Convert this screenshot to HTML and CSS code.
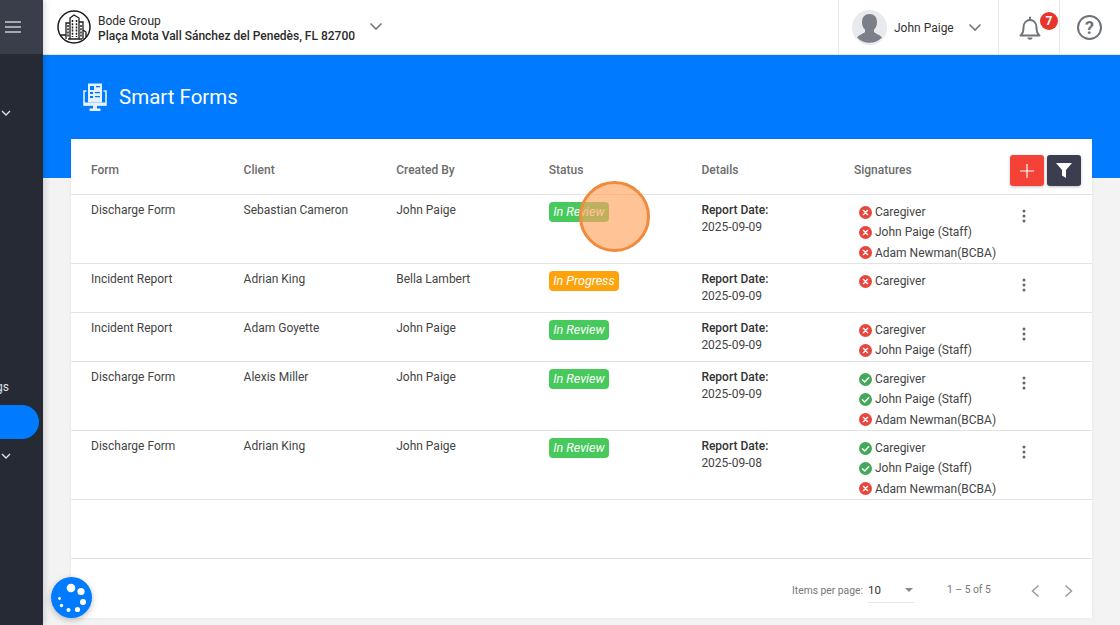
FILE: index.html
```html
<!DOCTYPE html>
<html lang="en">
<head>
    <meta charset="UTF-8">
    <meta name="viewport" content="width=device-width, initial-scale=1.0">
    <title>Smart Forms</title>
    <link rel="stylesheet" href="styles.css">
</head>
<body>
    <svg class="icon-defs" width="0" height="0">
        <symbol id="no" viewBox="0 0 14 14">
            <circle cx="7" cy="7" r="7" fill="#e8453c"/>
            <path d="M4.700 4.700l4.600 4.600M9.300 4.700l-4.600 4.600" stroke="#fff" stroke-width="1.500" stroke-linecap="round"/>
        </symbol>
        <symbol id="yes" viewBox="0 0 14 14">
            <circle cx="7" cy="7" r="7" fill="#43a85a"/>
            <path d="M3.700 7.200l2.400 2.400 4.300-4.500" fill="none" stroke="#fff" stroke-width="1.600" stroke-linecap="round" stroke-linejoin="round"/>
        </symbol>
        <symbol id="kebab" viewBox="0 0 4 14">
            <circle cx="2" cy="2" r="1.500"/>
            <circle cx="2" cy="7" r="1.500"/>
            <circle cx="2" cy="12" r="1.500"/>
        </symbol>
    </svg>

    <aside class="sidebar">
        <div class="side-top">
            <svg width="16" height="12" viewBox="0 0 16 12"><path d="M0 1h16M0 6h16M0 11h16" stroke="#c9ccd3" stroke-width="1.300"/></svg>
        </div>
        <div class="side-nav">
            <svg class="side-chev chev-first" width="10" height="6" viewBox="0 0 10 6"><path d="M1 1l4 4 4-4" fill="none" stroke="#dfe1e6" stroke-width="1.400"/></svg>
            <div class="side-label">Settings</div>
            <div class="side-pill"></div>
            <svg class="side-chev" width="10" height="6" viewBox="0 0 10 6"><path d="M1 1l4 4 4-4" fill="none" stroke="#dfe1e6" stroke-width="1.400"/></svg>
        </div>
    </aside>

    <main class="main">
        <header class="topbar">
            <div class="org">
                <svg class="org-logo" width="34" height="34" viewBox="0 0 34 34">
                    <circle cx="17" cy="17" r="16" fill="#fff" stroke="#1c1c1c" stroke-width="1.500"/>
                    <path d="M9 29V13h4M13 29V8l4-3 5 3v21M22 12h4v17M3.500 25H9M26 20l3 2v5M11 29h14" fill="none" stroke="#1c1c1c" stroke-width="1.300"/>
                    <path d="M15.500 10v17M19.500 10v17M11 15v12M24 15v12" stroke="#1c1c1c" stroke-width="1.500" stroke-dasharray="2 1.200"/>
                </svg>
                <div class="org-text">
                    <div class="org-name">Bode Group</div>
                    <div class="org-addr">Plaça Mota Vall Sánchez del Penedès, FL 82700</div>
                </div>
                <svg class="org-chev" width="14" height="9" viewBox="0 0 14 9"><path d="M1.500 1.500L7 7l5.500-5.500" fill="none" stroke="#777" stroke-width="1.600"/></svg>
            </div>
            <div class="user">
                <svg class="avatar" width="35" height="35" viewBox="0 0 35 35">
                    <circle cx="17.500" cy="17.500" r="17.500" fill="#e9eaed"/>
                    <path d="M10 12c0-5 3-8 7.500-8s7.500 3 7.500 8c0 3.500-1.200 6-3 7.500v2.500c1 1.500 5.500 2.500 8 5.500a17.500 17.500 0 0 1-25 0c2.500-3 7-4 8-5.500v-2.500c-1.800-1.500-3-4-3-7.500z" fill="#7b7f87"/>
                </svg>
                <span class="user-name">John Paige</span>
                <svg width="14" height="9" viewBox="0 0 14 9"><path d="M1.500 1.500L7 7l5.500-5.500" fill="none" stroke="#777" stroke-width="1.600"/></svg>
            </div>
            <div class="bell">
                <svg width="24" height="26" viewBox="0 0 24 26"><path d="M2.500 20.500c2-1.500 3-3.500 3-8 0-4.500 2.800-7.500 6.500-7.500s6.500 3 6.500 7.500c0 4.500 1 6.500 3 8zM12 2.500V5" fill="none" stroke="#6f7378" stroke-width="2" stroke-linejoin="round" stroke-linecap="round"/><path d="M9.500 22.500h5c0 3-5 3-5 0z" fill="#6f7378"/></svg>
                <span class="bell-count">7</span>
            </div>
            <div class="help">
                <span class="help-mark">?</span>
            </div>
        </header>

        <section class="banner">
            <svg width="24" height="28" viewBox="0 0 24 28">
                <path d="M5 .5h14v19H5z" fill="#e6f1ff"/>
                <path d="M7 3h4v4H7zM13 3h4v1.300h-4zM7 9h3v2H7zM12 9h5v1.300h-5zM7 13h3v2H7zM12 13h5v1.300h-5z" fill="#007bff"/>
                <path d="M3.500 8H1v14h22V8h-2.500" fill="none" stroke="#e6f1ff" stroke-width="1.600"/>
                <path d="M1 19.500h22v3H1zM10 22h4v3.500h-4zM6.500 25.500h11V28h-11z" fill="#e6f1ff"/>
            </svg>
            <h1 class="banner-title">Smart Forms</h1>
        </section>

        <section class="card">
            <div class="row head">
                <div>Form</div>
                <div>Client</div>
                <div>Created By</div>
                <div>Status</div>
                <div>Details</div>
                <div>Signatures</div>
                <div class="head-btns">
                    <button class="btn btn-add"><svg width="16" height="16" viewBox="0 0 16 16"><path d="M8 1v14M1 8h14" stroke="#fff" stroke-width="1.200"/></svg></button>
                    <button class="btn btn-filter"><svg width="16" height="15" viewBox="0 0 16 15"><path d="M0 0h16l-6 7v8l-4-2.500V7z" fill="#fff"/></svg></button>
                </div>
            </div>

            <div class="row">
                <div>Discharge Form</div>
                <div>Sebastian Cameron</div>
                <div>John Paige</div>
                <div><span class="tag tag-green">In Review</span></div>
                <div class="details"><b>Report Date:</b><span>2025-09-09</span></div>
                <ul class="signs">
                    <li><svg><use href="#no"/></svg>Caregiver</li>
                    <li><svg><use href="#no"/></svg>John Paige (Staff)</li>
                    <li><svg><use href="#no"/></svg>Adam Newman(BCBA)</li>
                </ul>
                <svg class="kebab"><use href="#kebab"/></svg>
            </div>

            <div class="row">
                <div>Incident Report</div>
                <div>Adrian King</div>
                <div>Bella Lambert</div>
                <div><span class="tag tag-orange">In Progress</span></div>
                <div class="details"><b>Report Date:</b><span>2025-09-09</span></div>
                <ul class="signs">
                    <li><svg><use href="#no"/></svg>Caregiver</li>
                </ul>
                <svg class="kebab"><use href="#kebab"/></svg>
            </div>

            <div class="row">
                <div>Incident Report</div>
                <div>Adam Goyette</div>
                <div>John Paige</div>
                <div><span class="tag tag-green">In Review</span></div>
                <div class="details"><b>Report Date:</b><span>2025-09-09</span></div>
                <ul class="signs">
                    <li><svg><use href="#no"/></svg>Caregiver</li>
                    <li><svg><use href="#no"/></svg>John Paige (Staff)</li>
                </ul>
                <svg class="kebab"><use href="#kebab"/></svg>
            </div>

            <div class="row">
                <div>Discharge Form</div>
                <div>Alexis Miller</div>
                <div>John Paige</div>
                <div><span class="tag tag-green">In Review</span></div>
                <div class="details"><b>Report Date:</b><span>2025-09-09</span></div>
                <ul class="signs">
                    <li><svg><use href="#yes"/></svg>Caregiver</li>
                    <li><svg><use href="#yes"/></svg>John Paige (Staff)</li>
                    <li><svg><use href="#no"/></svg>Adam Newman(BCBA)</li>
                </ul>
                <svg class="kebab"><use href="#kebab"/></svg>
            </div>

            <div class="row">
                <div>Discharge Form</div>
                <div>Adrian King</div>
                <div>John Paige</div>
                <div><span class="tag tag-green">In Review</span></div>
                <div class="details"><b>Report Date:</b><span>2025-09-08</span></div>
                <ul class="signs">
                    <li><svg><use href="#yes"/></svg>Caregiver</li>
                    <li><svg><use href="#yes"/></svg>John Paige (Staff)</li>
                    <li><svg><use href="#no"/></svg>Adam Newman(BCBA)</li>
                </ul>
                <svg class="kebab"><use href="#kebab"/></svg>
            </div>

            <div class="blank"></div>

            <footer class="pager">
                <span class="pager-label">Items per page:</span>
                <div class="pager-select">
                    <span>10</span>
                    <i class="caret"></i>
                </div>
                <span class="pager-range">1 – 5 of 5</span>
                <svg class="pager-prev" width="10" height="14" viewBox="0 0 10 14"><path d="M8.500 1.500L2.500 7l6 5.500" fill="none" stroke="#9a9a9a" stroke-width="1.500"/></svg>
                <svg class="pager-next" width="10" height="14" viewBox="0 0 10 14"><path d="M1.500 1.500L7.500 7l-6 5.500" fill="none" stroke="#9a9a9a" stroke-width="1.500"/></svg>
            </footer>
        </section>
    </main>

    <div class="click-spot"></div>

    <div class="cookie-btn">
        <svg width="41" height="41" viewBox="0 0 41 41">
            <circle cx="20" cy="11" r="4.300" fill="#fff"/>
            <circle cx="30" cy="14.500" r="3.600" fill="#fff"/>
            <circle cx="32" cy="25" r="3" fill="#fff"/>
            <circle cx="26.500" cy="32.500" r="2.600" fill="#fff"/>
            <circle cx="17.500" cy="33" r="2" fill="#fff"/>
            <circle cx="10.500" cy="28.500" r="1.700" fill="#fff"/>
            <circle cx="8.500" cy="21.500" r="1.400" fill="#fff"/>
        </svg>
    </div>
</body>
</html>
```

FILE: styles.css
```css
* {
    box-sizing: border-box;
}
html, body {
    height: 100%;
}
body {
    font-family: Roboto, "Liberation Sans", sans-serif;
    font-size: 12px;
    color: #444;
    background-color: #f3f3f3;
    margin: 0;
    display: flex;
    overflow: hidden;
}
.icon-defs {
    position: absolute;
}

/* sidebar */
.sidebar {
    width: 43px;
    flex-shrink: 0;
    background: #252a35;
    box-shadow: 2px 0 6px rgba(0, 0, 0, 0.15);
    z-index: 2;
    overflow: hidden;
}
.side-top {
    height: 54px;
    background: #3a3e4b;
    display: flex;
    align-items: center;
    padding-left: 5px;
}
.side-nav {
    display: flex;
    flex-direction: column;
    height: 571px;
}
.side-chev {
    margin: 0 0 0 1px;
    flex-shrink: 0;
}
.chev-first {
    margin-top: 56px;
}
.side-label {
    margin-top: 264px;
    width: 9px;
    height: 15px;
    line-height: 15px;
    color: #dfe1e6;
    white-space: nowrap;
    direction: rtl;
    overflow: hidden;
}
.side-pill {
    margin-top: 10px;
    width: 39px;
    height: 34px;
    background: #007bff;
    border-radius: 0 17px 17px 0;
}
.side-pill + .side-chev {
    margin-top: 14px;
}

/* top bar */
.main {
    flex: 1;
    min-width: 0;
    display: flex;
    flex-direction: column;
}
.topbar {
    height: 55px;
    background: #fff;
    display: flex;
    align-items: stretch;
    flex-shrink: 0;
    border-bottom: 1px solid #e4e6ea;
}
.org {
    flex: 1;
    display: flex;
    align-items: center;
    padding-left: 14px;
}
.org-logo {
    margin-right: 7px;
}
.org-text {
    line-height: 15px;
    padding-top: 3px;
    color: #2b2b2b;
}
.org-name {
    font-size: 12px;
}
.org-addr {
    font-weight: 500;
}
.org-chev {
    margin-left: 14px;
    margin-top: -1px;
}
.user {
    width: 161px;
    display: flex;
    align-items: center;
    padding-left: 13px;
    border-left: 1px solid #e6e6e6;
    border-right: 1px solid #e6e6e6;
}
.user-name {
    margin: 2px 14px 0 7px;
    color: #333;
    white-space: nowrap;
}
.bell {
    width: 61px;
    position: relative;
    display: flex;
    align-items: center;
    padding-left: 19px;
    padding-top: 2px;
    border-right: 1px solid #e6e6e6;
}
.bell-count {
    position: absolute;
    left: 41px;
    top: 12px;
    width: 18px;
    height: 18px;
    border-radius: 50%;
    background: #e8352c;
    color: #fff;
    font-size: 12px;
    font-weight: 700;
    text-align: center;
    line-height: 18px;
}
.help {
    width: 60px;
    display: flex;
    align-items: center;
    padding-left: 17px;
}
.help-mark {
    width: 25px;
    height: 25px;
    border: 2px solid #6f7378;
    border-radius: 50%;
    color: #6f7378;
    font-size: 18px;
    font-weight: 700;
    text-align: center;
    line-height: 21px;
}

/* blue banner */
.banner {
    height: 123px;
    flex-shrink: 0;
    background: #007bff;
    display: flex;
    align-items: flex-start;
    padding: 28px 0 0 40px;
}
.banner-title {
    margin: 0 0 0 12px;
    font-size: 20.500px;
    font-weight: 400;
    line-height: 28px;
    color: #fff;
}

/* table card */
.card {
    margin: -39px 28px 0 28px;
    background: #fff;
    height: 479px;
    display: flex;
    flex-direction: column;
    box-shadow: 0 0 4px rgba(0, 0, 0, 0.06);
}
.row {
    display: grid;
    grid-template-columns: repeat(5, 152.600px) 157px 1fr;
    min-height: 49px;
    padding-left: 20px;
    padding-top: 7px;
    border-bottom: 1px solid #e3e3e3;
    line-height: 16px;
    color: #444;
    flex-shrink: 0;
}
.row.head {
    height: 56px;
    padding-top: 23px;
    font-weight: 500;
    color: #6c6c6c;
}
.head-btns {
    display: flex;
    gap: 3px;
    margin-top: -7px;
    margin-left: -1px;
}
.btn {
    width: 34px;
    height: 31px;
    border: 0;
    padding: 0;
    border-radius: 3px;
    display: flex;
    align-items: center;
    justify-content: center;
    box-shadow: 0 1px 3px rgba(0, 0, 0, 0.25);
}
.btn-add {
    background: #f44236;
}
.btn-filter {
    background: #3a3e4e;
}
.tag {
    display: inline-block;
    height: 20px;
    line-height: 20px;
    padding: 0 4.500px;
    border-radius: 4px;
    font-size: 12.500px;
    font-style: italic;
    color: #fff;
    vertical-align: top;
}
.tag-green {
    background: #47c95c;
}
.tag-orange {
    background: #ffa30d;
}
.details {
    display: flex;
    flex-direction: column;
    gap: 1px;
}
.details b {
    font-weight: 500;
    color: #333;
}
.signs {
    list-style: none;
    margin: 0;
    padding: 0 0 0 5px;
}
.signs li {
    display: flex;
    align-items: center;
    height: 20.330px;
}
.signs svg {
    width: 13px;
    height: 13px;
    margin-right: 3px;
}
.kebab {
    width: 4px;
    height: 14px;
    fill: #666;
    margin: 7px 0 0 11px;
}
.blank {
    height: 59px;
    border-bottom: 1px solid #e3e3e3;
    flex-shrink: 0;
}

/* pager */
.pager {
    flex: 1;
    display: flex;
    align-items: center;
    padding: 5px 0 0 721px;
    font-size: 10.300px;
    color: #777;
}
.pager-label {
    width: 76px;
    white-space: nowrap;
}
.pager-select {
    width: 47px;
    height: 25px;
    display: flex;
    align-items: center;
    justify-content: space-between;
    padding-right: 2px;
    border-bottom: 1px solid #e6e6e6;
    color: #333;
    font-size: 11.500px;
}
.caret {
    border-left: 4.500px solid transparent;
    border-right: 4.500px solid transparent;
    border-top: 4px solid #888;
}
.pager-range {
    margin-left: 32px;
    width: 83px;
    margin-top: -2px;
}
.pager-prev {
    margin-right: 24px;
}

/* overlays */
.click-spot {
    position: absolute;
    left: 579px;
    top: 181px;
    width: 71px;
    height: 71px;
    border-radius: 50%;
    background: rgba(255, 163, 94, 0.65);
    border: 3px solid #f08a3c;
    z-index: 5;
}
.cookie-btn {
    position: absolute;
    left: 51px;
    top: 577px;
    width: 41px;
    height: 41px;
    border-radius: 50%;
    background: #007bff;
    box-shadow: 0 2px 6px rgba(0, 0, 0, 0.25);
    z-index: 5;
}
```
